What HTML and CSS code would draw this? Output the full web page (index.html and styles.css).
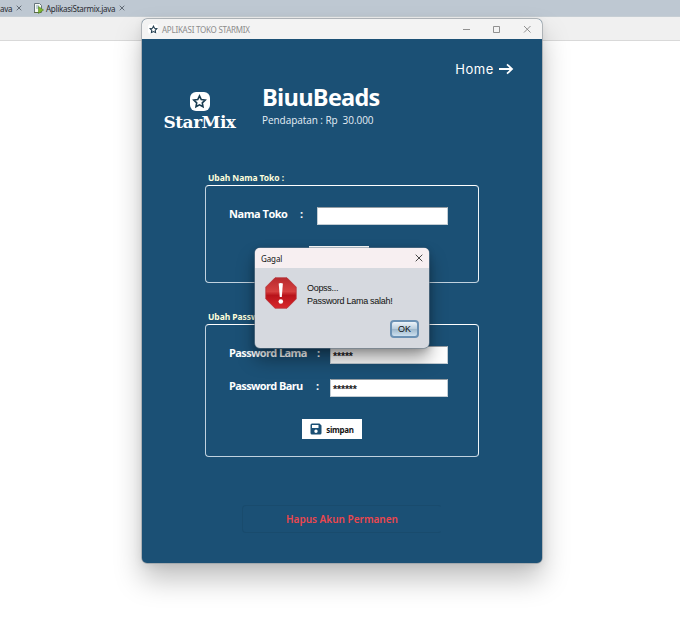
FILE: index.html
```html
<!DOCTYPE html>
<html lang="id">
<head>
<meta charset="utf-8">
<title>Aplikasi Toko StarMix</title>
<link rel="stylesheet" href="styles.css">
</head>
<body>
<div class="editor-tabs">
  <span class="tab-name first">ava</span>
  <svg class="tab-close" viewBox="0 0 6 6"><path d="M.7.7l4.6 4.6M5.3.7L.7 5.3"/></svg>
  <svg class="file-icon" viewBox="0 0 11 11"><path d="M1.5.5h5l2 2v7h-7z" fill="#f7f9f3" stroke="#66747c"/><path d="M3 3h3M3 5h3" stroke="#86a5b8"/><path d="M1 9.5h7" stroke="#596d42"/><path d="M5.5 3.5l5 3.5-5 3.5z" fill="#82b92e" stroke="#4f7f25" stroke-width=".6"/></svg>
  <span class="tab-name">AplikasiStarmix.java</span>
  <svg class="tab-close" viewBox="0 0 6 6"><path d="M.7.7l4.6 4.6M5.3.7L.7 5.3"/></svg>
</div>
<div class="toolbar"></div>

<main class="window">
  <header class="titlebar">
    <span class="app-icon"><svg viewBox="0 0 24 24"><path d="M12 3l2.8 5.8 6.3.8-4.6 4.5 1.1 6.3-5.6-3-5.6 3 1.1-6.3-4.6-4.5 6.3-.8z"/></svg></span>
    <span class="window-title">APLIKASI TOKO STARMIX</span>
    <svg class="window-controls" viewBox="0 0 70 10"><path d="M1 5.5h7M31.5 2.5h6v6h-6zM62 2l6.5 6.5M68.500 2L62 8.500"/></svg>
  </header>
  <nav class="home"><span>Home</span><svg viewBox="0 0 16 12"><path d="M1 6h13M9 1.300L14 6l-5 4.700"/></svg></nav>
  <section class="brand">
    <div class="logo">
      <span class="logo-mark"><svg viewBox="0 0 24 24"><path d="M12 3l2.800 5.800 6.300.800-4.600 4.500 1.100 6.300-5.600-3-5.600 3 1.100-6.300-4.600-4.500 6.300-.800z"/></svg></span>
      <span class="logo-name">StarMix</span>
    </div>
    <div class="store">
      <h1>BiuuBeads</h1>
      <p><span class="income-label">Pendapatan : Rp</span><span>30.000</span></p>
    </div>
  </section>

  <section class="group">
    <h2><span>Ubah Nama Toko :</span></h2>
    <div class="panel name-panel">
      <div class="row"><span class="label name-label">Nama Toko</span><span class="colon name-colon">:</span><span class="field"></span></div>
      <div class="save hidden-save"></div>
    </div>
  </section>
  <section class="group password-group">
    <h2><span>Ubah Password :</span></h2>
    <div class="panel password-panel">
      <div class="row"><span class="label old-label">Password Lama</span><span class="colon">:</span><span class="field">*****</span></div>
      <div class="row"><span class="label new-label">Password Baru</span><span class="colon new-colon">:</span><span class="field">******</span></div>
      <div class="save"><svg viewBox="0 0 12 12"><path fill-rule="evenodd" d="M2 .5h7.500L11.500 2.500V10q0 1.500-1.500 1.500H2Q.5 11.500.5 10V2Q.5.5 2 .5zM2 2v3h6.500V2zM6 6.500a1.700 1.700 0 1 0 0 3.400 1.700 1.700 0 0 0 0-3.400z"/></svg><span>simpan</span></div>
    </div>
  </section>
  <div class="delete"><span>Hapus Akun Permanen</span></div>
</main>

<div class="dialog">
  <header class="dialog-title"><span>Gagal</span><svg viewBox="0 0 8 8"><path d="M.7.7l6.600 6.600M7.300.7L.7 7.300"/></svg></header>
  <div class="dialog-body">
    <svg class="error" viewBox="0 0 32 32">
      <defs><linearGradient id="red" x2="0" y2="1"><stop stop-color="#b82a2e"/><stop offset=".45" stop-color="#d6403f"/><stop offset=".58" stop-color="#b9131a"/><stop offset="1" stop-color="#d8292d"/></linearGradient></defs>
      <path d="M10 .8h12L31.200 10v12L22 31.200H10L.8 22V10z" fill="url(#red)" stroke="#b5343a" stroke-width=".8"/>
      <path d="M13.700 6.500q2.100-1 4.200 0l-1.100 13.500h-2z" fill="#fff"/><circle cx="15.800" cy="24.500" r="2.300" fill="#fff"/>
    </svg>
    <div class="message"><div><span class="oops">Oopss...</span></div><div><span class="wrong">Password Lama salah!</span></div></div>
  </div>
  <div class="dialog-actions"><button>OK</button></div>
</div>
</body>
</html>
```
FILE: styles.css
```css
* { box-sizing: border-box; }
body { margin: 0; width: 680px; height: 617px; overflow: hidden; background: #fff; font-family: "Open Sans", sans-serif; }
svg { display: block; fill: none; flex: none; }
span { white-space: nowrap; }

.editor-tabs { height: 17px; display: flex; align-items: center; background: #bec8d2; border-bottom: 1px solid #c6ced4; font: 8px "Noto Sans", sans-serif; color: #272a30; }
.tab-close { width: 6px; height: 6px; margin-left: 4px; stroke: #626b75; stroke-width: 1; }
.file-icon { width: 11px; height: 11px; margin: 0 2px 0 11px; }
.tab-name { letter-spacing: -.28px; }
.tab-name.first { width: 12px; }
.toolbar { height: 24px; background: #f0f0f0; border-bottom: 1px solid #d9d9d9; }

.window { position: absolute; left: 142px; top: 19px; width: 400px; height: 543.5px; overflow: hidden; border-radius: 5px; background: #1b5075; box-shadow: 0 0 0 .7px #9ba2a8, 0 16px 28px rgba(0,0,0,.25), 0 2px 10px rgba(0,0,0,.08); color: #fff; }
.titlebar { height: 20px; display: flex; align-items: center; background: #f3f3f3; }
.app-icon { width: 10px; height: 10px; margin-left: 6px; border-radius: 3px; background: #fff; display: grid; place-items: center; }
.app-icon svg { width: 9px; height: 9px; stroke: #233e50; stroke-width: 2.8; }
.window-title { margin-left: 4px; color: #8c8c8c; font: 8px "Noto Sans", sans-serif; letter-spacing: -.24px; }
.window-controls { width: 70px; height: 10px; margin-left: auto; margin-right: 10px; stroke: #858585; stroke-width: .9; }
.home { height: 20px; margin: 20px 28px 0 0; display: flex; align-items: center; justify-content: flex-end; gap: 4px; font-size: 13px; font-family: Inter, sans-serif; letter-spacing: .6px; }
.home svg { width: 16px; height: 12px; stroke: #fff; stroke-width: 1.8; }
.brand { display: grid; grid-template-columns: 73px 1fr; column-gap: 26px; padding: 4px 21px 0; height: 93px; }
.logo { display: flex; flex-direction: column; align-items: center; padding-top: 9px; }
.logo-mark { width: 20px; height: 19px; background: #fff; border-radius: 6px; display: grid; place-items: center; }
.logo-mark svg { width: 15px; height: 15px; stroke: #183b50; stroke-width: 2.6; }
.logo-name { margin-top: 1px; font: bold 17px/20px "DejaVu Serif", serif; letter-spacing: -.5px; }
.store h1 { margin: 0; font-size: 23.5px; line-height: 28px; letter-spacing: -.75px; }
.store p { margin: 0; font-size: 10px; line-height: 19px; display: flex; gap: 5px; letter-spacing: -.06px; color: #e5eef5; }

.group { width: 274px; margin-left: 63px; }
.group h2 { margin: 0; padding-left: 3px; height: 13px; color: #ffffdc; font: bold 8.5px/11px "Noto Sans", sans-serif; letter-spacing: -.06px; }
.panel { border: 1px solid #c1d2df; border-top-color: #fff; border-right-color: #eef4f8; border-radius: 4px; padding: 21px 30px 0 23px; }
.name-panel { height: 98px; }
.password-group { margin-top: 28px; }
.password-panel { height: 133px; }
.row { display: flex; height: 18px; }
.row + .row { margin-top: 15px; }
.label { font-weight: bold; font-size: 11px; line-height: 13px; width: 88px; letter-spacing: -.48px; }
.name-label { width: 71px; }
.new-label { width: 87px; }
.old-label, .new-label { letter-spacing: -.62px; }
.colon { font-weight: bold; font-size: 11px; line-height: 13px; width: 13px; }
.new-colon { width: 14px; }
.name-colon { width: 17px; }
.field { flex: 1; background: #fff; border: 1px solid #c3cdd4; border-top-color: #959da3; color: #222; font: bold 10.5px/18px "Liberation Sans", sans-serif; padding-left: 2px; letter-spacing: -.12px; }
.save { width: 60px; height: 20px; margin: 22px 0 0 73px; display: flex; align-items: center; justify-content: center; gap: 4px; background: #fff; color: #151515; font: bold 8px "Noto Sans", sans-serif; letter-spacing: -.3px; }
.save svg { width: 12px; height: 12px; fill: #1b5075; }
.hidden-save { margin: 21px 0 0 80px; }
.delete { width: 200px; height: 28px; margin: 48px 0 0 100px; border-radius: 4px; border: 1px solid #194b6d; border-right-color: transparent; display: grid; place-items: center; color: #ec464d; font: 600 10px "Noto Sans", sans-serif; }

.dialog { position: absolute; left: 255px; top: 248px; width: 174px; height: 100px; border-radius: 5px; overflow: hidden; background: #d6d9df; box-shadow: 0 0 0 .6px #6b7f90, 0 11px 18px rgba(0,0,0,.38), 0 2px 7px rgba(0,0,0,.2); color: #111; }
.dialog-title { height: 20px; background: #f7eff1; padding: 0 6px; display: flex; align-items: center; justify-content: space-between; font: 8px "Noto Sans", sans-serif; letter-spacing: -.1px; }
.dialog-title svg { width: 8px; height: 8px; stroke: #333; stroke-width: .9; }
.dialog-body { display: flex; gap: 10px; padding: 9px 0 0 10px; height: 51px; }
.error { width: 32px; height: 32px; }
.message { font: 9px/12.5px "Liberation Sans", sans-serif; padding-top: 5px; }
.wrong { letter-spacing: -.28px; }
.oops { letter-spacing: -.3px; }
.dialog-actions { display: flex; justify-content: flex-end; padding-right: 10px; }
.dialog-actions button { width: 29px; height: 18px; margin-top: 1px; padding: 0; font: 9px "Liberation Sans", sans-serif; color: #111; border: 2px solid #6b91b4; border-radius: 4px; background: linear-gradient(#edf4fa, #b6cbdb 50%, #9eb8cc 52%, #cde0ef); }
```
